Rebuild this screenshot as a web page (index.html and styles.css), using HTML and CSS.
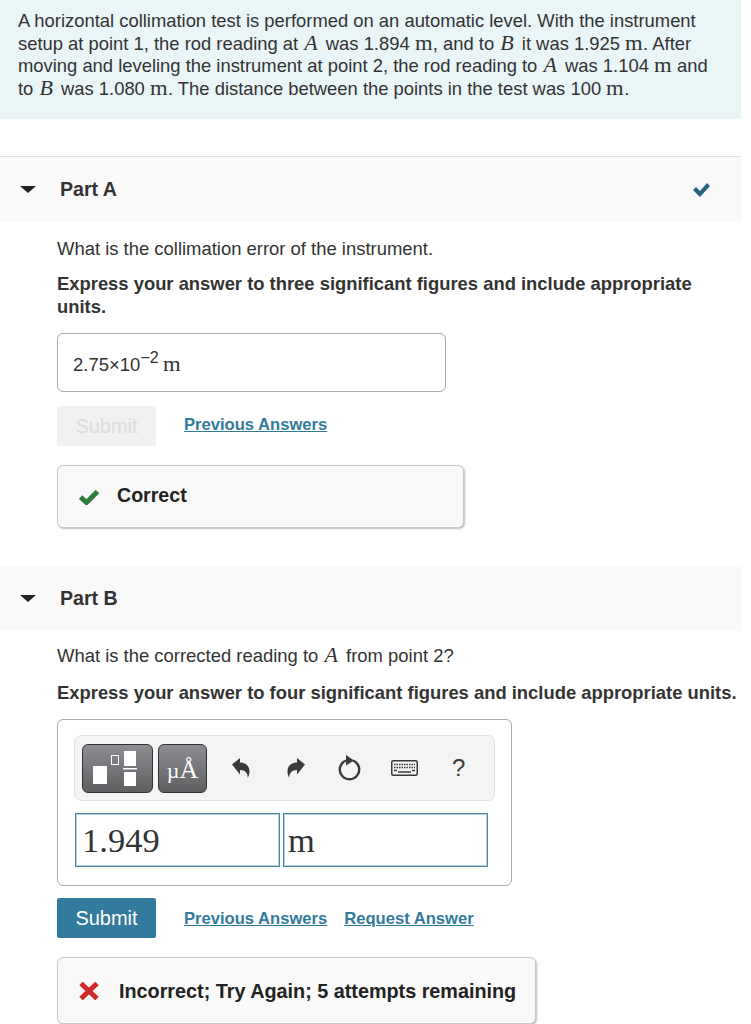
FILE: index.html
```html
<!DOCTYPE html>
<html>
<head>
<meta charset="utf-8" />
<title>Part A and Part B</title>
<link rel="stylesheet" href="styles.css">
</head>
<body>

<!-- intro -->
<div class="intro">
A horizontal collimation test is performed on an automatic level. With the instrument setup at point 1, the rod reading at <i class="mvar">A</i> was 1.894 <span class="mrm">m</span>, and to <i class="mvar">B</i> it was 1.925 <span class="mrm">m</span>. After moving and leveling the instrument at point 2, the rod reading to <i class="mvar">A</i> was 1.104 <span class="mrm">m</span> and to <i class="mvar">B</i> was 1.080 <span class="mrm">m</span>. The distance between the points in the test was 100 <span class="mrm">m</span>.
</div>

<!-- part A -->
<div class="partHead first">
 <span class="caret"></span>
 <span class="partName">Part A</span>
 <svg class="partDone" width="19" height="15" viewBox="0 0 19 15"><path d="M1 8l3-3 4 4 7-8 3 3-10 11z" fill="#27637e"/></svg>
</div>
<div class="partBody bodyA">
 <p class="ask">What is the collimation error of the instrument.</p>
 <p class="how">Express your answer to three significant figures and include appropriate units.</p>
 <div class="answerBox">2.75&times;10<sup>&minus;2</sup> <span class="mrm">m</span></div>
 <div class="actions">
  <span class="btn btnOff">Submit</span>
  <a class="lnk" href="#">Previous Answers</a>
 </div>
 <div class="result resultOk">
  <svg width="20" height="16" viewBox="0 0 20 16"><path d="M1.500 8l6 5.500L18.500 2.500" fill="none" stroke="#2e7d3c" stroke-width="5"/></svg>
  <span class="resultText">Correct</span>
 </div>
</div>

<!-- part B -->
<div class="partHead">
 <span class="caret"></span>
 <span class="partName">Part B</span>
</div>
<div class="partBody bodyB">
 <p class="ask">What is the corrected reading to <i class="mvar">A</i> from point 2?</p>
 <p class="how">Express your answer to four significant figures and include appropriate units.</p>
 <div class="editor">
  <div class="toolbar">
   <span class="tplBtn wide">
    <svg width="44" height="35" viewBox="0 0 44 35">
     <rect x="0" y="15" width="14" height="18" fill="#fff"/>
     <rect x="18.500" y="4.500" width="7" height="9" fill="none" stroke="#fff"/>
     <rect x="31" y="0" width="12" height="15" fill="#fff"/>
     <rect x="30" y="17" width="14" height="1.500" fill="#fff"/>
     <rect x="31" y="21" width="12" height="14" fill="#fff"/>
    </svg>
   </span>
   <span class="tplBtn unit"><span class="micro">&micro;</span>&Aring;</span>
   <svg class="tool undo" width="20" height="22" viewBox="0 0 20 22"><path d="M1 7.500L9 1v4.500c6 0 9.500 3.500 9.500 9 0 2.500-.8 4.700-1.800 6.500.3-5-2.700-8-7.700-8v4.500z" fill="#3a3a3a"/></svg>
   <svg class="tool redo" width="20" height="22" viewBox="0 0 20 22"><path d="M19 7.500L11 1v4.500c-6 0-9.500 3.500-9.500 9 0 2.500.8 4.700 1.800 6.500-.3-5 2.700-8 7.700-8v4.500z" fill="#3a3a3a"/></svg>
   <svg class="tool reset" width="24" height="26" viewBox="0 0 24 26"><path d="M8 5.500a9.700 9.700 0 1 0 7 0" fill="none" stroke="#3a3a3a" stroke-width="2.400"/><path d="M8 0l8 5.500-8 5z" fill="#3a3a3a"/></svg>
   <svg class="tool keys" width="27" height="16" viewBox="0 0 27 16"><rect x="0.750" y="0.750" width="25.500" height="14.500" rx="1.500" fill="#f4f4f4" stroke="#3a3a3a" stroke-width="1.500"/><path d="M3 4.500h21M3 7.500h21" stroke="#3a3a3a" stroke-width="1.500" stroke-dasharray="1.500 1"/><path d="M3 10.500h3M21 10.500h3M7 12h13" stroke="#3a3a3a" stroke-width="1.500"/></svg>
   <span class="helpMark">?</span>
  </div>
  <div class="fields">
   <div class="field">1.949</div>
   <div class="field">m</div>
  </div>
 </div>
 <div class="actions actionsB">
  <span class="btn btnOn">Submit</span>
  <a class="lnk" href="#">Previous Answers</a>
  <a class="lnk" href="#">Request Answer</a>
 </div>
 <div class="result resultBad">
  <svg width="20" height="18" viewBox="0 0 20 18"><path d="M2 1.500l16 15M18 1.500l-16 15" fill="none" stroke="#cf2a2a" stroke-width="5"/></svg>
  <span class="resultText">Incorrect; Try Again; 5 attempts remaining</span>
 </div>
</div>

</body>
</html>
```

FILE: styles.css
```css
html, body { margin:0; padding:0; background:#fff; }
body { width:741px; font-family:"Liberation Sans", Arial, sans-serif; color:#333; overflow-x:hidden; }

.intro { background:#e9f5f7; padding:10px 28px 19px 18px; height:90px; font-size:18.400px; line-height:22.700px; }
.mvar { font-family:"Liberation Serif", serif; font-size:22px; line-height:0; margin-left:1px; letter-spacing:3px; }
.mrm { display:inline-block; width:18px; font-family:"Liberation Serif", serif; font-size:21px; line-height:0; transform:scaleX(1.08); transform-origin:left; }

.partHead { display:flex; align-items:center; height:65px; background:#f9f9f9; }
.partHead.first { margin-top:37px; border-top:1px solid #e0e0e0; }
.caret { width:0; height:0; margin-left:20px; border-left:8px solid transparent; border-right:8px solid transparent; border-top:7px solid #222; }
.partName { margin-left:24px; font-size:19.600px; font-weight:bold; color:#333; }
.partDone { margin-left:auto; margin-right:30px; }

.partBody { padding-left:57px; }
.bodyA { padding-top:16px; padding-bottom:38px; }
.bodyB { padding-top:14px; }
.ask { margin:0 0 12px; font-size:18.450px; line-height:22px; }
.bodyB .ask { margin-bottom:14px; }
.how { margin:0 0 15px; font-size:18.400px; line-height:23px; font-weight:bold; }

.answerBox { box-sizing:border-box; width:389px; height:59px; padding:4px 0 0 15px; display:flex; align-items:center; gap:4px; border:1px solid #aaa; border-radius:6px; font-size:18.500px; }
.answerBox sup { font-size:16px; line-height:1; align-self:flex-start; margin-top:12px; margin-left:-4px; }
.answerBox .mrm { line-height:1; }

.actions { display:flex; align-items:center; height:40px; margin-top:14px; }
.actionsB { margin-top:12px; }
.btn { width:99px; height:40px; line-height:40px; text-align:center; border-radius:2px; font-size:20px; }
.btnOff { background:#f1f1f1; color:#dcdcdc; }
.btnOn { background:#327b9c; color:#fff; }
.lnk { margin-left:28px; font-size:16.600px; font-weight:bold; color:#327b9c; }
.lnk + .lnk { margin-left:17px; }
.bodyA .lnk { margin-bottom:2px; }
.bodyB .lnk { margin-top:2px; }

.result { box-sizing:border-box; display:flex; align-items:center; height:63px; padding-left:21px; background:#f9f9f9; border:1px solid #c8c8c8; border-radius:6px; box-shadow:1px 1px 2px #bbb; font-size:19.600px; font-weight:bold; color:#222; }
.resultOk { width:407px; gap:18px; margin-top:19px; }
.resultOk .resultText { margin-bottom:2px; }
.resultBad { width:479px; height:67px; gap:20px; margin-top:19px; font-size:19.800px; }
.resultBad .resultText { margin-top:2px; }

.editor { box-sizing:border-box; width:455px; height:167px; padding:15px 16px; border:1px solid #aaa; border-radius:6px; }
.toolbar { box-sizing:border-box; display:flex; align-items:center; height:66px; padding-left:7px; background:#f4f4f4; border:1px solid #e2e2e2; border-radius:7px; }
.tplBtn { display:flex; align-items:center; justify-content:center; box-sizing:border-box; height:49px; border:1px solid #333; border-radius:6px; background:linear-gradient(#8e8d92, #5f5f62); color:#fff; }
.tplBtn.wide { width:71px; padding-right:5px; }
.tplBtn.unit { width:49px; margin-left:5px; font-family:"Liberation Serif", serif; font-size:26px; align-items:baseline; line-height:50px; }
.micro { font-size:22px; }
.undo { margin-left:24px; }
.redo { margin-left:35px; }
.reset { margin-left:32px; }
.keys { margin-left:29px; }
.helpMark { margin-left:34px; font-size:24px; color:#3a3a3a; }

.fields { display:flex; gap:3px; margin-top:12px; margin-left:1px; }
.field { box-sizing:border-box; width:205px; height:54px; padding-left:6px; line-height:52px; border:1px solid #4a87a3; box-shadow:inset 0 0 0 1px rgba(74,135,163,.4); font-family:"Liberation Serif", serif; font-size:34.500px; color:#333; }
.field + .field { padding-left:4px; }
```
